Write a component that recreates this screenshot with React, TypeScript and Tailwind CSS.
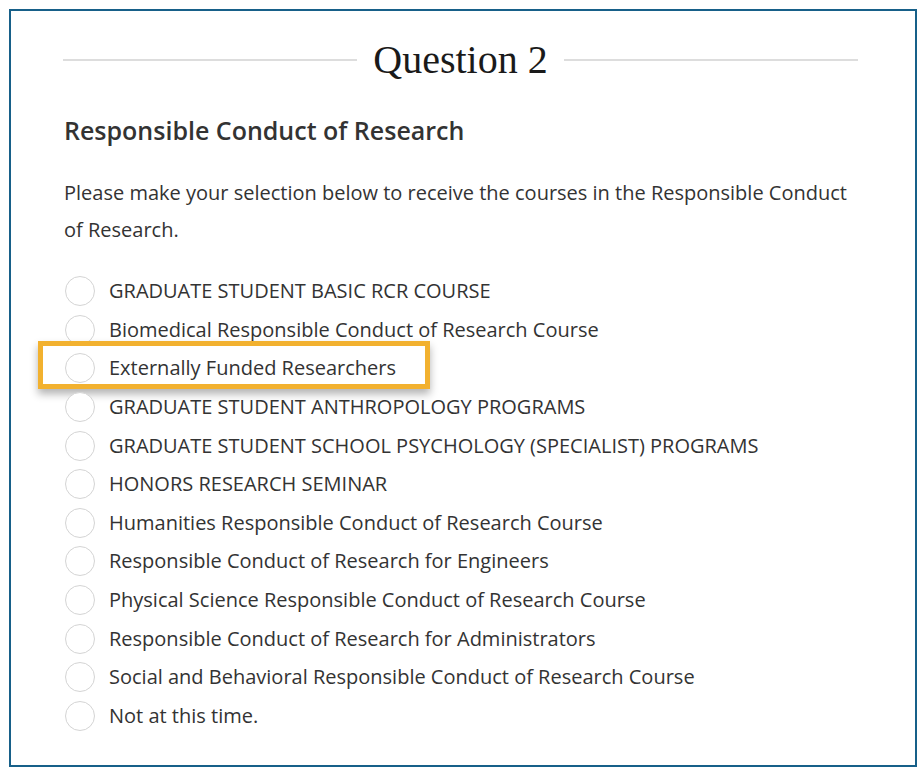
import React from "react";

const options = [
  "GRADUATE STUDENT BASIC RCR COURSE",
  "Biomedical Responsible Conduct of Research Course",
  "Externally Funded Researchers",
  "GRADUATE STUDENT ANTHROPOLOGY PROGRAMS",
  "GRADUATE STUDENT SCHOOL PSYCHOLOGY (SPECIALIST) PROGRAMS",
  "HONORS RESEARCH SEMINAR",
  "Humanities Responsible Conduct of Research Course",
  "Responsible Conduct of Research for Engineers",
  "Physical Science Responsible Conduct of Research Course",
  "Responsible Conduct of Research for Administrators",
  "Social and Behavioral Responsible Conduct of Research Course",
  "Not at this time.",
];

export default function App() {
  return (
    <div className="w-[922px] h-[775px] bg-white pt-[9px] pl-[9px]" style={{ fontFamily: '"Open Sans", sans-serif' }}>
      <div className="w-[908px] h-[758px] border-2 border-[#176089] bg-white">
        <div className="ml-[52px] mr-[57px] mt-[26px] flex items-center gap-[16px]">
          <div className="flex-1 h-[2px] bg-[#dddddd]" />
          <div className="text-[40px] leading-[46px] text-[#1a1a1a]" style={{ fontFamily: '"Liberation Serif", serif' }}>
            Question 2
          </div>
          <div className="flex-1 h-[2px] bg-[#dddddd]" />
        </div>
        <div className="ml-[53px] mr-[57px]">
          <h2 className="mt-[32px] text-[25px] leading-[30px] font-semibold text-[#333333]">
            Responsible Conduct of Research
          </h2>
          <p className="mt-[29px] text-[20px] leading-[37px] text-[#333333] pr-[8px]">
            Please make your selection below to receive the courses in the Responsible Conduct of Research.
          </p>
          <div className="mt-[24px] flex flex-col">
            {options.map((o, i) => (
              <div key={o} className="relative h-[38.6px] flex items-center">
                <div className="w-[30px] h-[30px] shrink-0 rounded-full border border-[#d4d4d4] bg-white ml-[1px]" />
                <span className="ml-[14px] text-[20px] text-[#333333] whitespace-nowrap">{o}</span>
                {i === 2 && (
                  <div className="absolute left-[-26px] top-[-8px] w-[392px] h-[48px] border-[5px] border-[#f2b12f] shadow-[0_5px_8px_rgba(0,0,0,0.3)]" />
                )}
              </div>
            ))}
          </div>
        </div>
      </div>
    </div>
  );
}
